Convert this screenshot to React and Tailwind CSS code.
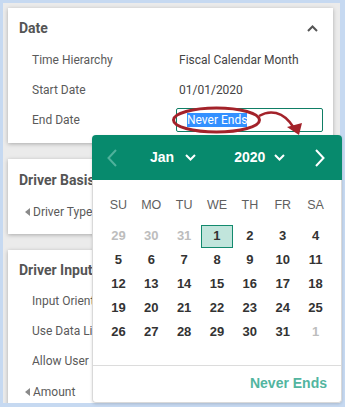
import React from 'react';

const PANEL_FONT = { fontFamily: 'Roboto, "Liberation Sans", sans-serif' };
const CAL_FONT = { fontFamily: '"Liberation Sans", Arial, sans-serif' };

const WEEK = ['SU', 'MO', 'TU', 'WE', 'TH', 'FR', 'SA'];

const DAYS = [
  { d: 29, out: true }, { d: 30, out: true }, { d: 31, out: true },
  ...Array.from({ length: 31 }, (_, i) => ({ d: i + 1 })),
  { d: 1, out: true },
];

function ChevronDown({ className }) {
  return (
    <svg width="11" height="7" viewBox="0 0 11 7" className={className}>
      <path d="M1 1 L5.5 5.5 L10 1" fill="none" stroke="currentColor" strokeWidth="2" />
    </svg>
  );
}

function Triangle() {
  return (
    <svg width="5" height="8" viewBox="0 0 5 8" className="mr-[3px] shrink-0">
      <path d="M5 0 L0 4 L5 8 Z" fill="#8a8a8a" />
    </svg>
  );
}

function Card({ children, className = '' }) {
  return (
    <div className={`bg-white shadow-[0_1px_4px_rgba(0,0,0,0.28)] shrink-0 ${className}`}>
      {children}
    </div>
  );
}

function Row({ label, children }) {
  return (
    <div className="h-[30px] flex items-center pl-[24px] text-[12px]">
      <span className="w-[147px] text-[#5a5a5a]">{label}</span>
      <span className="text-[#444]">{children}</span>
    </div>
  );
}

// rows in the lower cards sit behind the date popup, so their text is clipped at its edge
function HiddenRow({ label }) {
  return (
    <div className="h-[30px] flex items-center pl-[24px] text-[12px]">
      <span className="w-[60px] overflow-hidden whitespace-nowrap text-[#5a5a5a]">{label}</span>
    </div>
  );
}

function SectionTitle({ children }) {
  return (
    <div className="h-[20px] flex items-center pl-[11px]">
      <span className="w-[73px] overflow-hidden whitespace-nowrap text-[14px] font-bold text-[#555]">{children}</span>
    </div>
  );
}

function DatePopup() {
  return (
    <div className="absolute left-[92px] top-[135px] w-[250px] h-[268px] flex flex-col shadow-[0_1px_3px_rgba(0,0,0,0.15)] rounded-[4px]" style={CAL_FONT}>
      <div className="h-[45px] bg-[#078a6d] rounded-t-[4px] flex items-center text-white font-bold text-[14px] shrink-0">
        <div className="w-[40px] flex justify-center text-[#4fb29c]">
          <svg width="10" height="18" viewBox="0 0 10 18">
            <path d="M9 1 L1.5 9 L9 17" fill="none" stroke="currentColor" strokeWidth="2" />
          </svg>
        </div>
        <div className="ml-[18px] flex items-center gap-[11px]">
          <span>Jan</span>
          <ChevronDown />
        </div>
        <div className="ml-[38px] flex items-center gap-[9px]">
          <span>2020</span>
          <ChevronDown />
        </div>
        <div className="ml-[30px]">
          <svg width="10" height="18" viewBox="0 0 10 18">
            <path d="M1 1 L8.5 9 L1 17" fill="none" stroke="currentColor" strokeWidth="2" />
          </svg>
        </div>
      </div>
      <div className="flex-1 bg-white border-x border-b border-[#d9d9d9] rounded-b-[4px] flex flex-col">
        <div className="mt-[13px] px-[9px] grid grid-cols-7 h-[24px] items-center text-[12.5px] text-[#5f5f5f]">
          {WEEK.map(w => (
            <span key={w} className="text-center">{w}</span>
          ))}
        </div>
        <div className="mt-[7px] px-[9px] grid grid-cols-7 text-[13px] font-bold">
          {DAYS.map((x, i) => (
            <div key={i} className="h-[24px] flex items-center justify-center">
              {!x.out && x.d === 1 ? (
                <span className="w-[32px] h-[23px] flex items-center justify-center bg-[#c1e5dc] border border-[#138a6e] text-[#333]">
                  1
                </span>
              ) : (
                <span className={x.out ? 'text-[#bdbdbd]' : 'text-[#333]'}>{x.d}</span>
              )}
            </div>
          ))}
        </div>
        <div className="flex-1" />
        <div className="h-[37px] border-t border-[#dcdcdc] flex items-center justify-end pr-[14px] pb-[2px] font-bold text-[14px] text-[#52b5a0]">
          Never Ends
        </div>
      </div>
    </div>
  );
}

export default function App() {
  return (
    <div className="relative w-[345px] h-[407px] bg-[#c6d9f1] pt-[3px] pl-[3px] pr-[5px] pb-[4px] overflow-hidden" style={PANEL_FONT}>
      <div className="h-full bg-[#ebebeb] pl-[5px] pr-[7px] pt-[5px] flex flex-col gap-[16px] overflow-hidden">
        <Card className="h-[135px] pt-[10px]">
          <div className="h-[20px] flex items-center justify-between pl-[11px] pr-[15px]">
            <span className="text-[14px] font-bold text-[#555]">Date</span>
            <svg width="11" height="7" viewBox="0 0 11 7">
              <path d="M1 6 L5.5 1.5 L10 6" fill="none" stroke="#555" strokeWidth="2" />
            </svg>
          </div>
          <div className="mt-[7px]">
            <Row label="Time Hierarchy">Fiscal Calendar Month</Row>
            <Row label="Start Date">01/01/2020</Row>
            <div className="h-[30px] flex items-center pl-[24px] text-[12px]">
              <span className="w-[144px] text-[#5a5a5a]">End Date</span>
              <div className="w-[147px] h-[24px] border border-[#0f7e65] rounded-[2px] flex items-center pl-[10px]">
                <span className="bg-[#3390ff] text-white leading-[14px]">Never Ends</span>
              </div>
            </div>
          </div>
        </Card>

        <Card className="h-[75px] pt-[11px]">
          <SectionTitle>Driver Basis</SectionTitle>
          <div className="h-[24px] mt-[10px] flex items-center pl-[17px] text-[12px] text-[#5a5a5a]">
            <Triangle />
            <span className="w-[60px] overflow-hidden whitespace-nowrap">Driver Type</span>
          </div>
        </Card>

        <Card className="flex-1 pt-[10px]">
          <SectionTitle>Driver Input</SectionTitle>
          <div className="mt-[6px]">
            <HiddenRow label="Input Orientation" />
            <HiddenRow label="Use Data Lists" />
            <HiddenRow label="Allow User Entry" />
            <div className="h-[32px] flex items-center pl-[17px] text-[12px] text-[#5a5a5a]">
              <Triangle />
              Amount
            </div>
          </div>
        </Card>
      </div>

      <DatePopup />

      <svg className="absolute left-0 top-0 pointer-events-none" width="345" height="407" viewBox="0 0 345 407">
        <ellipse cx="216.5" cy="120" rx="43" ry="12" fill="none" stroke="#a3222a" strokeWidth="3" />
        <path d="M259 116 C 269 110, 283 110, 294 128" fill="none" stroke="#a3222a" strokeWidth="2.5" />
        <path d="M287 127 L302 123 L299 135 Z" fill="#a3222a" />
      </svg>
    </div>
  );
}
